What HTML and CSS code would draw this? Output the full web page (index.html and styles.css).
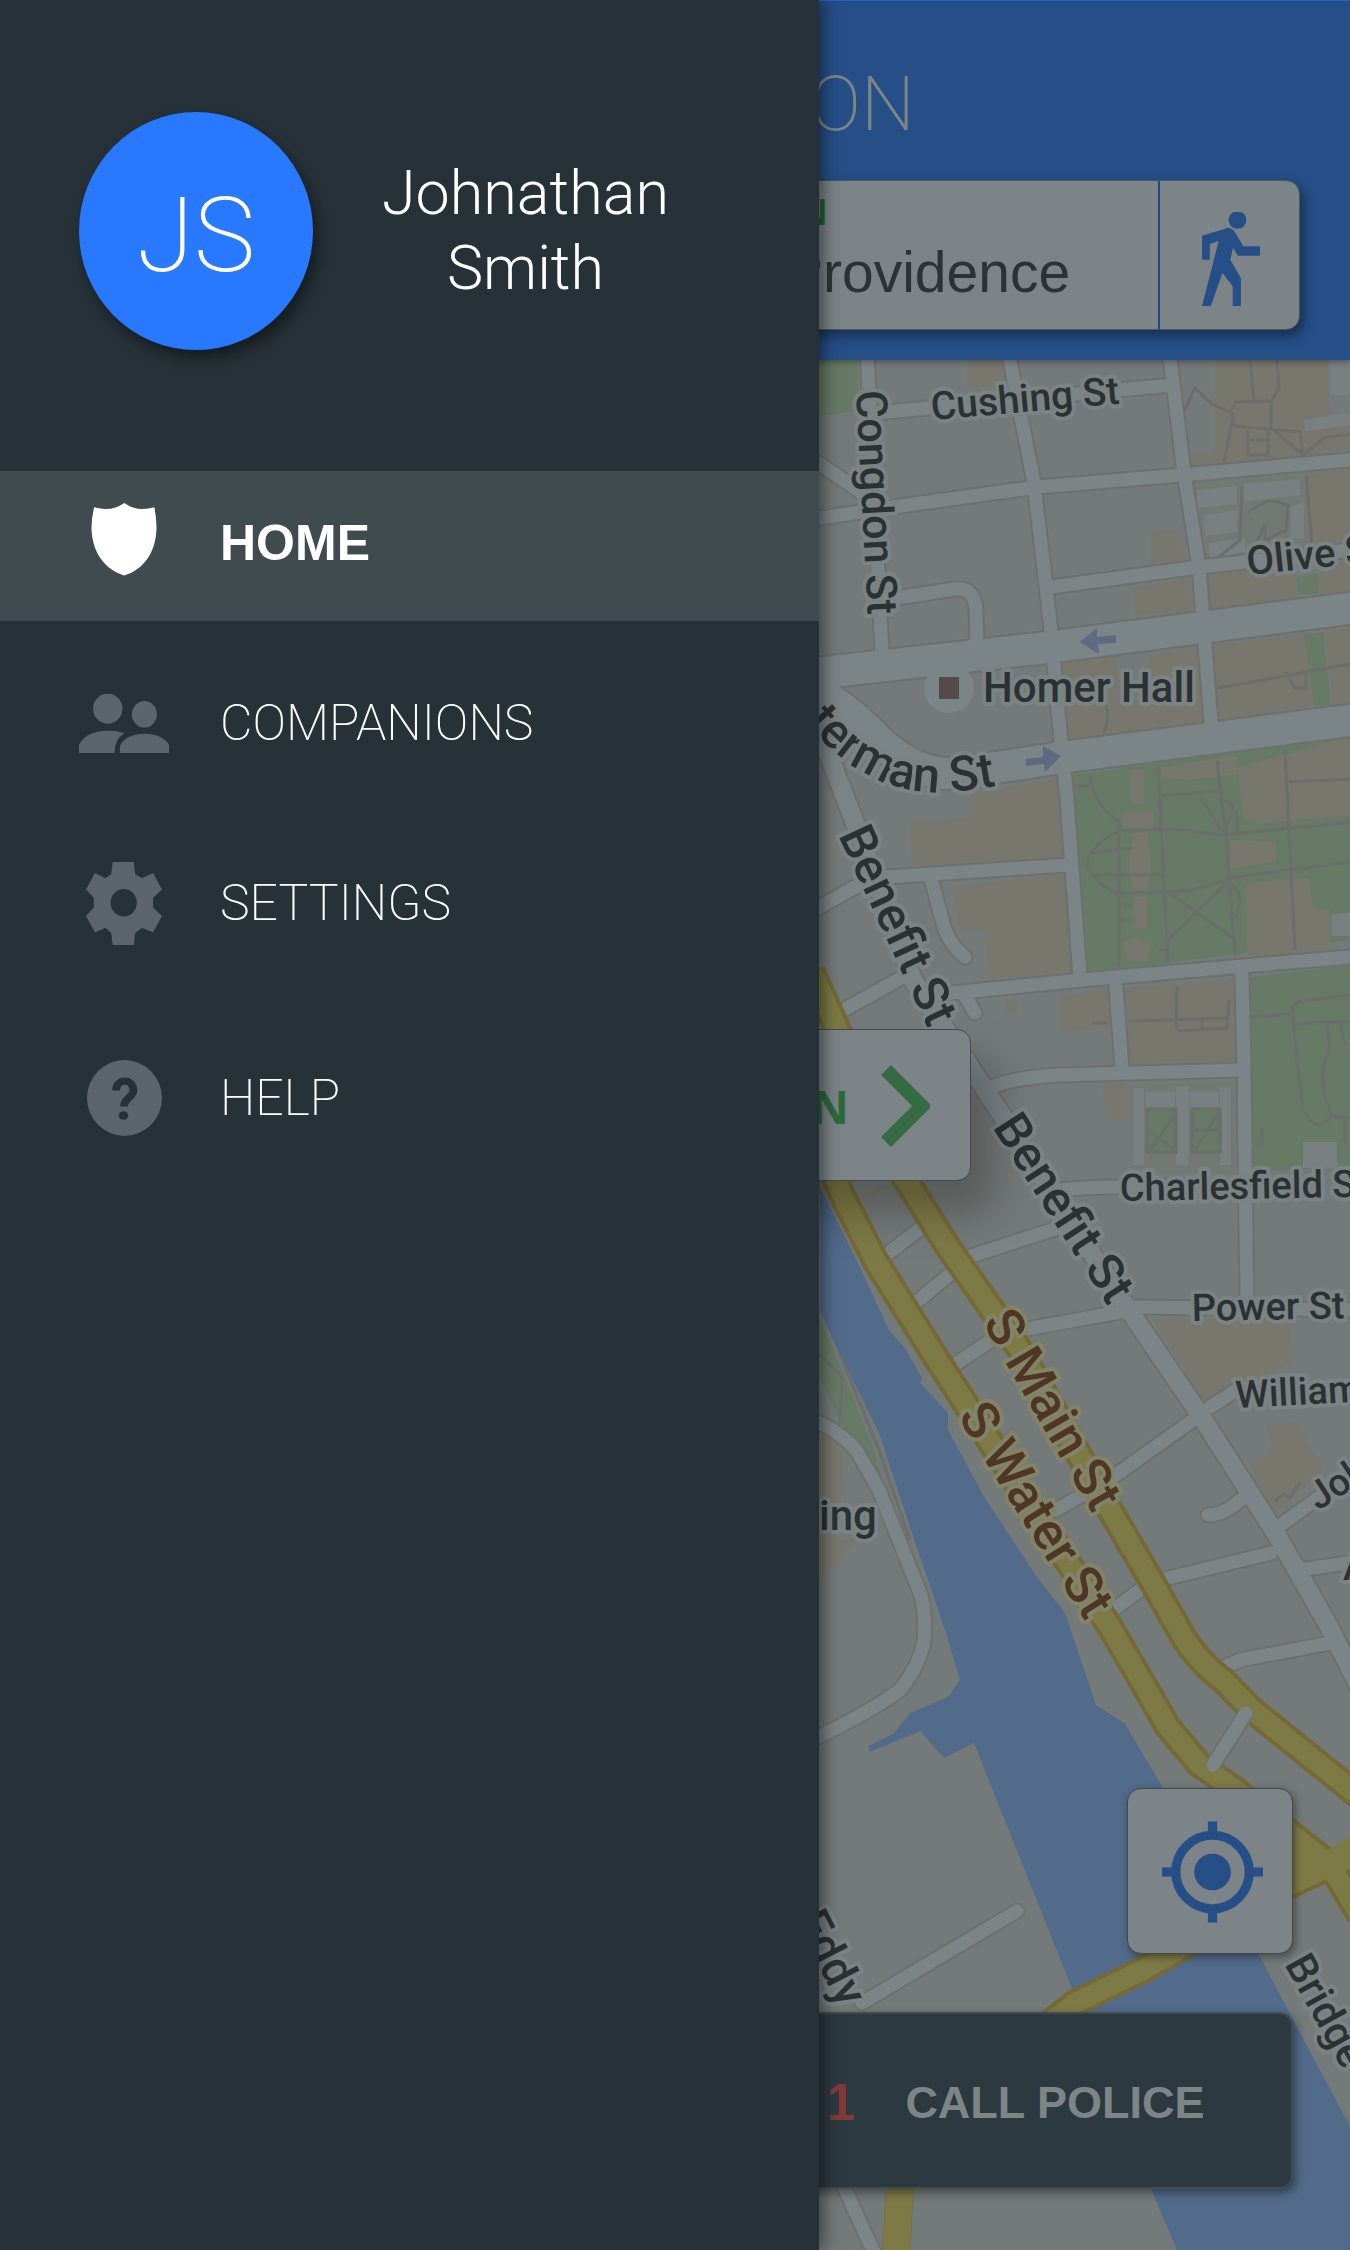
FILE: index.html
```html
<!DOCTYPE html>
<html lang="en">
<head>
<meta charset="utf-8">
<meta name="viewport" content="width=device-width, initial-scale=1">
<title>Home</title>
<link rel="stylesheet" href="styles.css">
</head>
<body>
<div class="app">
  <svg class="map" viewBox="0 0 1350 2250" preserveAspectRatio="xMidYMin slice" aria-hidden="true">
    <rect class="land" width="1350" height="2250"/>

    <!-- parks and built-up blocks -->
    <g class="park">
      <path d="M810 350H858V411L810 417Z"/>
      <path d="M1072 775L1350 735V940L1086 973Z"/>
      <path d="M1251 977L1350 965V1167L1251 1172Z"/>
      <path d="M1304 635L1323 632L1331 705L1314 706Z"/>
      <path d="M1296 577L1318 573V594H1299Z"/>
      <path d="M820 1320L844 1373L875 1453L882 1480L851 1437L837 1415L820 1377Z"/>
      <path d="M1343 2108L1350 2120V2135L1343 2112Z"/>
    </g>
    <g class="block">
      <path d="M967 360H1004L1010 385L968 388Z"/>
      <path d="M1215 360H1327L1330 415L1350 420V450L1189 468V455L1215 453Z"/>
      <path d="M1306 475L1350 468V547L1313 553Z"/>
      <path d="M1151 532L1180 530L1185 562L1151 563Z"/>
      <path d="M1134 588L1189 578L1192 612L1135 615Z"/>
      <path d="M1203 575L1294 566L1298 600L1204 612Z"/>
      <path d="M1318 565L1350 560V592L1320 596Z"/>
      <path d="M1060 662L1116 656L1120 700H1147L1150 655L1197 648L1208 723L1065 742Z"/>
      <path d="M1211 645L1304 635L1314 706L1218 720Z"/>
      <path d="M1325 632L1350 628V703L1333 705Z"/>
      <path d="M970 795L1056 778L1063 857L912 865L910 823L970 818Z"/>
      <path d="M953 887L1065 873L1072 973L989 978L986 930L960 930Z"/>
      <path d="M1060 997L1110 988L1113 1027L1060 1032Z"/>
      <path d="M1005 1000H1018V1015L1006 1010Z"/>
      <path d="M1125 988L1234 980L1235 1062L1128 1065Z"/>
      <path d="M1103 1085L1127 1083V1120H1106Z"/>
      <path d="M1161 767L1237 756V774L1190 780L1162 778Z"/>
      <path d="M1237 767L1350 737V815L1255 824L1244 818Z"/>
      <path d="M1246 883L1309 878L1313 907L1330 910V952L1247 957Z"/>
      <path d="M1130 770H1144V804H1131ZM1123 811H1153V829L1123 826ZM1132 833H1147L1151 863L1147 890H1133L1129 865ZM1133 897H1147V928H1133ZM1123 942L1135 938L1150 945L1147 962L1126 960Z"/>
      <path d="M1230 840L1276 842V861L1230 869Z"/>
      <path d="M1154 1320L1290 1317L1292 1363L1206 1405Z"/>
      <path d="M1266 1425L1297 1423L1323 1470L1275 1513L1251 1467L1273 1450Z"/>
      <path d="M820 1433L842 1447L840 1540L855 1540L820 1585Z"/>
      <path d="M860 1195L895 1180L865 1205Z"/>
    </g>
    <g class="campus">
      <path d="M1190 483L1306 475L1310 555L1199 562Z"/>
      <path d="M1130 1085L1234 1083V1173H1131Z"/>
    </g>
    <g class="park">
      <rect x="1147" y="1109" width="29" height="43"/>
      <rect x="1192" y="1109" width="28" height="43"/>
    </g>
    <g class="pale">
      <path d="M1197 490L1237 486V504L1197 508ZM1243 484L1300 479V495L1244 502ZM1203 516L1237 510V532L1206 536ZM1290 508L1304 502V538H1291ZM1208 543L1245 538V552L1210 558Z"/>
      <path d="M1304 420L1350 412V425L1305 431ZM1330 360H1350V395H1330ZM1303 1142H1337V1168H1303ZM1331 915L1350 912V936H1332Z"/>
      <path d="M1133 1088H1144V1165H1133ZM1176 1086H1189V1165H1176ZM1220 1088H1231V1165H1220ZM1146 1092H1175V1108H1146ZM1190 1092H1219V1108H1190Z"/>
    </g>

    <!-- footpaths -->
    <g class="paths">
      <path d="M1184 412L1195 388L1212 404L1230 412L1236 402L1271 401L1279 388L1277 360M1271 401V428L1303 455L1324 438L1350 434M1232 420L1224 465M1232 412L1234 426L1300 432L1303 455M1250 360L1254 402M1248 430V455H1268V430M1250 440H1268"/>
      <path d="M1242 486L1240 540L1215 560M1248 512L1268 500L1288 505L1286 530L1265 540M1265 540V525L1255 545M1306 475L1312 545"/>
      <path d="M1218 688L1350 664M1285 672L1295 688H1306V670M1106 705Q1110 718 1104 732"/>
      <path d="M1090 776Q1092 800 1112 816L1119 822V966M1158 767L1168 962M1217 761L1226 835L1235 955M1285 750L1295 950M1119 831L1176 829L1222 835L1350 822M1119 831Q1090 845 1087 864Q1095 885 1118 893L1168 892Q1195 892 1228 878L1350 862M1093 853L1132 848M1095 875H1163M1168 892L1233 938M1228 882L1168 940M1162 796L1217 791M1198 793L1223 833L1234 810Q1232 800 1219 799M1229 883Q1248 895 1234 918M1236 810L1238 834M1119 905H1132M1119 920H1132M1158 950H1168M1073 786H1089M1289 782L1350 779"/>
      <path d="M1177 986L1176 1025L1179 1031L1227 1028L1229 1000M1128 1021L1226 1018M1202 1020V1028M1092 1023H1108"/>
      <path d="M1251 1017L1292 1014Q1292 1003 1302 1001L1350 995M1292 1014L1296 1050L1303 1110Q1316 1135 1332 1116Q1315 1075 1330 1047L1326 1023M1294 1024L1350 1021M1332 1116L1350 1118M1340 1024L1345 1045M1345 1118V1143M1262 1128V1145H1254"/>
      <path d="M1147 1109H1176V1152H1147ZM1192 1109H1220V1152H1192ZM1150 1150L1175 1115M1147 1130L1175 1150M1195 1150L1219 1112M1192 1130H1220"/>
      <path d="M1275 1501L1283 1494L1290 1498L1300 1482M820 1355L842 1376L840 1425M838 1350L879 1450L910 1540"/>
    </g>

    <!-- river -->
    <path class="water" d="M820 1187L855 1257L889 1330L906 1350L922 1378L920 1383L948 1413V1430L986 1500L1037 1577L1065 1613L1096 1705L1125 1724L1163 1788L1258 1953L1350 2127V2250H1177L1151 2189L1075 1996L974 1743L944 1758L920 1731L870 1752L868 1746L893 1734L910 1713L948 1697L960 1680L946 1633L910 1527L879 1433L838 1350L820 1310Z"/>

    <!-- streets: casing first, then surface -->
    <defs>
      <g id="streets">
        <path d="M867 350L882 652M875 413L1172 385M1008 350L1034 483L1051 630L1058 710L1067 800L1080 977M1169 350L1184 473L1199 567L1211 723"/>
        <path d="M820 518L893 507L1037 487L1182 475L1360 459M818 463L858 490L875 507M1051 587L1199 567L1360 549M890 599L955 589Q975 587 976 610L977 640"/>
        <path d="M818 908L855 887L886 877L1068 865M932 882L944 927Q950 945 965 957M951 993L1082 980L1360 956M965 996L975 1013M838 1013L903 977M1116 987L1122 1067M1242 975L1244 1070L1247 1306"/>
        <path d="M990 1088Q1010 1078 1058 1075L1244 1070M1060 1190Q1080 1186 1240 1186M968 1257L1061 1227M1015 1331L1120 1312M1130 1307L1360 1310M951 1367L990 1341M882 1258L925 1225M913 1305L955 1270"/>
        <path d="M1244 1497Q1225 1515 1208 1515M1051 1513L1113 1477L1196 1418M1210 1407L1240 1388M1278 1527L1325 1493M1160 1580L1271 1553M1113 1610L1144 1587M1299 1570L1360 1561M1223 1668L1240 1660L1330 1643"/>
        <path d="M818 1422Q845 1435 858 1453L879 1490L920 1593Q926 1610 924 1640Q920 1665 900 1690Q870 1712 818 1737M1017 1911L862 2003M845 2189L875 2255"/>
      </g>
      <g id="benefit"><path d="M818 728L855 823L913 980L1003 1117L1120 1297L1199 1413L1278 1537L1327 1623L1360 1688"/></g>
      <g id="avenues"><path d="M810 674L1051 647L1360 607M810 690Q840 700 880 742Q920 778 960 773L1065 757L1360 719"/></g>
      <g id="primary">
        <path d="M812 972L840 1035M830 1165L841 1193L875 1260L931 1350L965 1403L1110 1627L1141 1680L1168 1727L1199 1764L1234 1789L1327 1862M890 1155L906 1180L948 1247L1020 1350L1110 1510L1151 1580L1185 1640Q1205 1668 1223 1680L1251 1709L1360 1797M1051 2022L1075 2003L1141 1971L1292 1884L1360 1853M1333 1870L1360 1915M896 2255L900 2185"/>
      </g>
    </defs>
    <use href="#streets" class="street-casing"/>
    <use href="#benefit" class="benefit-casing"/>
    <use href="#avenues" class="avenue-casing"/>
    <use href="#streets" class="street"/>
    <use href="#benefit" class="benefit"/>
    <use href="#avenues" class="avenue"/>
    <use href="#primary" class="primary-casing"/>
    <use href="#primary" class="primary"/>
    <path class="primary-wide" d="M1290 1862L1327 1866L1360 1846M900 2185L896 2255"/>
    <path class="street-casing" d="M1244 1717L1215 1762"/>
    <path class="street" d="M1246 1713L1213 1765"/>

    <g class="arrow">
      <path d="M1080 642L1097 628V637L1116 635V643L1098 644L1099 654Z"/>
      <path d="M1061 756L1043 746V757L1026 759V766L1044 764L1045 772Z"/>
    </g>
    <circle class="poi" cx="949" cy="688" r="25"/>
    <rect class="poi-mark" x="939" y="677" width="20" height="22"/>

    <path id="curve" fill="none" d="M805 722Q860 788 930 792Q965 793 1015 782"/>
    <g class="label">
      <text transform="translate(932 420) rotate(-5)" font-size="39">Cushing St</text>
      <text transform="translate(856 391) rotate(87)" font-size="43">Congdon St</text>
      <text x="983" y="702" font-size="42">Homer Hall</text>
      <text transform="translate(1248 575) rotate(-6)" font-size="40">Olive S</text>
      <text font-size="49"><textPath href="#curve">terman St</textPath></text>
      <text transform="translate(838 835) rotate(65)" font-size="49">Benefit St</text>
      <text transform="translate(992 1127) rotate(57)" font-size="49">Benefit St</text>
      <text transform="translate(1120 1201) rotate(-1)" font-size="38">Charlesfield S</text>
      <text transform="translate(1192 1321) rotate(-1)" font-size="38">Power St</text>
      <text transform="translate(1236 1408) rotate(-3)" font-size="38">William</text>
      <text transform="translate(1318 1511) rotate(-33)" font-size="38">Joh</text>
      <text x="1343" y="1580" font-size="40">A</text>
      <text x="819" y="1530" font-size="42">ing</text>
      <text transform="translate(795 1920) rotate(63)" font-size="46">Eddy</text>
      <text transform="translate(1284 1964) rotate(61)" font-size="42">Bridge</text>
    </g>
    <g class="label label-primary">
      <text transform="translate(982 1322) rotate(60)" font-size="52">S Main St</text>
      <text transform="translate(957 1416) rotate(58)" font-size="52">S Water St</text>
    </g>
  </svg>

  <header class="topbar">
    <h1 class="title">ON</h1>
    <div class="search">
      <div class="search-field">
        <label class="search-label" for="place">N</label>
        <input class="search-input" id="place" type="text" value="Providence">
      </div>
      <button class="mode" type="button" aria-label="Walk">
        <svg class="mode-icon" viewBox="1138 635 170 282" preserveAspectRatio="none"><circle cx="1242" cy="659" r="26"/><path d="M1138 706L1213 683Q1228 683 1236 698L1259 738H1308V766H1243L1229 742L1221 778L1252 834V917H1228V858L1198 818L1164 917H1138L1187 722L1161 731V778H1138Z"/></svg>
      </button>
    </div>
  </header>

  <main class="controls">
    <button class="go" type="button">N
      <svg class="go-icon" viewBox="0 0 49 82"><path d="M5 5L41 41L5 77"/></svg>
    </button>
    <button class="locate" type="button" aria-label="My location">
      <svg class="locate-icon" viewBox="1 1 22 22"><circle class="ring" cx="12" cy="12" r="8"/><circle cx="12" cy="12" r="4"/><path d="M11 1H13V4H11ZM11 20H13V23H11ZM1 11H4V13H1ZM20 11H23V13H20Z"/></svg>
    </button>
    <button class="police" type="button"><span class="police-number">1</span><span>CALL POLICE</span></button>
  </main>

  <aside class="drawer">
    <div class="profile">
      <div class="avatar">JS</div>
      <p class="name">Johnathan<br>Smith</p>
    </div>
    <nav class="menu">
      <a class="item item-active" href="#home">
        <span class="item-icon"><svg width="66" height="73" viewBox="171 88 127 156" preserveAspectRatio="none"><path d="M177 97Q210 108 235 88Q260 108 293 97Q297 120 297 140C297 195 270 232 235 243C200 232 172 195 172 140Q172 120 177 97Z"/></svg></span>HOME</a>
      <a class="item" href="#companions">
        <span class="item-icon"><svg width="90" height="59" viewBox="151 485 172 125" preserveAspectRatio="none"><ellipse cx="206" cy="516" rx="28" ry="32"/><ellipse cx="276" cy="528" rx="24" ry="28"/><path d="M151 610V593Q165 563 206 563Q224 563 238 568Q219 580 219 610ZM229 610V595Q240 570 276 569Q312 570 323 593V610Z"/></svg></span>COMPANIONS</a>
      <a class="item" href="#settings">
        <span class="item-icon"><svg width="76" height="83" viewBox="163 854 145 175" preserveAspectRatio="none"><path fill-rule="evenodd" d="M214 854H254L257 880L270 888L291 877L308 912L291 930V950L308 968L291 1002L270 993L257 1003L254 1029H214L211 1003L200 993L180 1002L163 968L178 950V930L163 912L180 877L200 888L211 880ZM235 911A25 29 0 1 0 235 969A25 29 0 1 0 235 911Z"/></svg></span>SETTINGS</a>
      <a class="item item-help" href="#help">
        <span class="item-icon"><svg width="75" height="76" viewBox="165 1272 144 160" preserveAspectRatio="none"><ellipse cx="237" cy="1352" rx="72" ry="80"/><path class="mark" d="M221 1336C221 1310 254 1310 254 1336C254 1350 236 1352 236 1370"/><circle class="dot" cx="235" cy="1389" r="9"/></svg></span>HELP</a>
    </nav>
  </aside>
</div>
</body>
</html>
```
FILE: styles.css
```css
* { box-sizing: border-box; }

body {
  margin: 0;
  background: #263238;
  font-family: "Liberation Sans", Arial, sans-serif;
}

button { font: inherit; cursor: pointer; }

.app {
  position: relative;
  display: flex;
  flex-direction: column;
  min-height: 100vh;
  overflow: hidden;
}

/* Map */
.map { position: absolute; inset: 0; width: 100%; height: 100%; }
.land { fill: #747a79; }
.park { fill: #677a65; }
.block { fill: #77776d; }
.campus { fill: #727972; }
.pale { fill: #788082; }
.water { fill: #526b8b; }
.paths { fill: none; stroke: #6b6e6d; stroke-width: 3; }

.street-casing, .street, .benefit-casing, .benefit,
.avenue-casing, .avenue, .primary-casing, .primary, .primary-wide { fill: none; stroke-linejoin: round; }
.street-casing, .street { stroke-linecap: round; }
.street-casing { stroke: #6e706e; stroke-width: 17; }
.street { stroke: #7b8487; stroke-width: 13; }
.benefit-casing { stroke: #6e706e; stroke-width: 22; }
.benefit { stroke: #7b8487; stroke-width: 18; }
.avenue-casing { stroke: #6e706e; stroke-width: 35; }
.avenue { stroke: #7b8487; stroke-width: 31; }
.primary-casing { stroke: #756a37; stroke-width: 28; }
.primary { stroke: #7e7a46; stroke-width: 20; }
.primary-wide { stroke: #7e7a46; stroke-width: 27; }

.arrow { fill: #5f6980; }
.poi { fill: #7b8487; }
.poi-mark { fill: #544a49; }

.label {
  font-family: Roboto, sans-serif;
  font-weight: 500;
  fill: #2b3233;
  stroke: #7b8384;
  stroke-width: 8;
  stroke-linejoin: round;
  paint-order: stroke;
}
.label-primary { fill: #4f3625; stroke: #828367; }

/* Header */
.topbar {
  position: relative;
  display: flex;
  flex-direction: column;
  gap: 28px;
  padding: 55px 0 30px;
  border-top: 1px solid #2262c8;
  background: #264f88;
  box-shadow: 0 2px 6px rgba(0, 0, 0, .35);
}
.title {
  margin: 0 0 0 60vw;
  color: #7d8587;
  font: 200 76px/96px Roboto, sans-serif;
}
.search {
  display: flex;
  height: 150px;
  margin: 0 50px 0 56vw;
  border: 1px solid #4d5658;
  border-radius: 14px;
  background: #7c8487;
  box-shadow: 4px 6px 12px rgba(0, 0, 0, .4);
}
.search-field {
  display: flex;
  flex: 1;
  flex-direction: column;
  gap: 5px;
  min-width: 0;
  padding: 10px 0 0 28px;
}
.search-label {
  padding-left: 16px;
  color: #23602f;
  font-size: 36px;
  font-weight: 700;
  line-height: 44px;
}
.search-input {
  width: 100%;
  height: 64px;
  padding: 0;
  border: 0;
  outline: 0;
  background: none;
  color: #2b3336;
  font: 57px/64px "Liberation Sans", Arial, sans-serif;
}
.mode {
  display: flex;
  align-items: center;
  justify-content: center;
  width: 141px;
  padding: 8px 0 0 2px;
  border: 0;
  border-left: 2px solid #1d4888;
  background: none;
}
.mode-icon { width: 58px; height: 94px; fill: #264f88; }

/* Controls over the map */
.controls {
  position: relative;
  display: flex;
  flex: 1;
  flex-direction: column;
  padding: 669px 57px 61px 56vw;
}
.go, .locate {
  display: flex;
  align-items: center;
  border: 1px solid #43494c;
  border-radius: 14px;
  background: #7c8487;
}
.go {
  align-self: flex-start;
  justify-content: flex-end;
  gap: 32px;
  width: 215px;
  height: 152px;
  padding: 2px 40px 0 0;
  box-shadow: 24px 32px 44px rgba(0, 0, 0, .25);
  color: #2d6a3c;
  font: 700 46px/60px "Open Sans", sans-serif;
}
.go-icon { width: 49px; height: 82px; fill: none; stroke: #356a42; stroke-width: 14; }
.locate {
  align-self: flex-end;
  justify-content: center;
  width: 166px;
  height: 166px;
  margin: auto 0 58px;
  padding: 2px 0 0 4px;
  box-shadow: 2px 3px 8px rgba(0, 0, 0, .4);
}
.locate-icon { width: 101px; height: 102px; fill: #264f88; }
.ring { fill: none; stroke: #264f88; stroke-width: 2; }
.police {
  display: flex;
  align-items: center;
  gap: 50px;
  height: 177px;
  padding: 4px 0 0 69px;
  border: 2px solid #424b4f;
  border-radius: 14px;
  background: #2d3940;
  box-shadow: 3px 4px 10px rgba(0, 0, 0, .4);
  color: #7d8587;
  font-size: 45px;
  font-weight: 700;
  white-space: nowrap;
}
.police-number { color: #803b38; font-size: 51px; }

/* Drawer */
.drawer {
  position: absolute;
  inset: 0 auto 0 0;
  width: 60.67vw;
  background: #263238;
  box-shadow: 4px 0 16px rgba(0, 0, 0, .5);
}
.profile {
  display: flex;
  align-items: center;
  gap: 69px;
  height: 471px;
  padding: 0 0 9px 79px;
}
.avatar {
  display: flex;
  flex: none;
  align-items: center;
  justify-content: center;
  width: 234px;
  height: 238px;
  padding-top: 10px;
  border-radius: 50%;
  background: #2979ff;
  box-shadow: 5px 8px 14px rgba(0, 0, 0, .45);
  color: #fff;
  font: 200 104px/120px Roboto, sans-serif;
}
.name {
  margin: 0;
  color: #fff;
  font: 300 61px/75px Roboto, sans-serif;
  text-align: center;
}
.menu { display: flex; flex-direction: column; gap: 30px; }
.item {
  display: flex;
  align-items: center;
  height: 150px;
  padding: 0 0 6px 79px;
  color: #fff;
  font: 200 50px/60px Roboto, sans-serif;
  text-decoration: none;
}
.item-active {
  background: #404b50;
  font: 700 50px/60px "Liberation Sans", Arial, sans-serif;
}
.item-help { margin-top: 15px; }
.item-icon {
  display: flex;
  justify-content: center;
  width: 90px;
  margin-right: 51px;
  fill: #5b656b;
}
.item-active .item-icon { padding-bottom: 8px; fill: #fff; }
.mark { fill: none; stroke: #263238; stroke-width: 15; }
.dot { fill: #263238; }
```
